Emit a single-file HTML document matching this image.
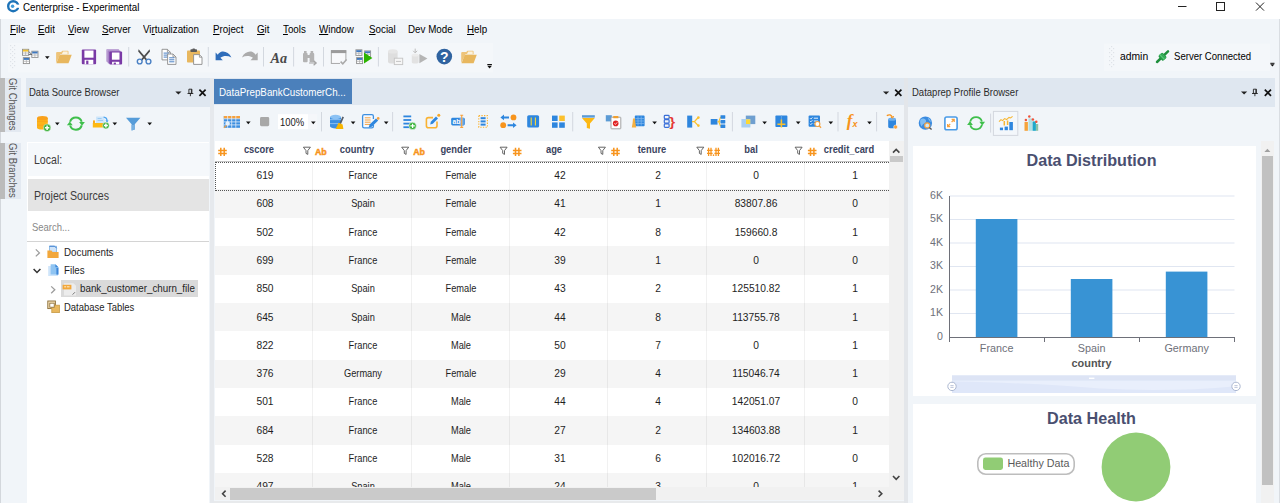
<!DOCTYPE html><html><head><meta charset="utf-8"><title>Centerprise - Experimental</title><style>
*{box-sizing:border-box;margin:0;padding:0}
html,body{width:1280px;height:503px;overflow:hidden}
body{position:relative;background:#f1f5f9;font-family:"Liberation Sans",sans-serif;font-size:12px;color:#1e1e1e}
.a{position:absolute}
.t{position:absolute;white-space:nowrap;transform-origin:0 50%;transform:scaleX(.89);line-height:14px;height:14px;font-size:11px}
.tc{position:absolute;white-space:nowrap;transform-origin:50% 50%;transform:scaleX(.93);line-height:14px;height:14px;text-align:center;font-size:11px}
u{text-decoration:underline;text-underline-offset:.5px;text-decoration-thickness:1px}
svg{position:absolute;overflow:visible}
</style></head><body>
<div class="a" style="left:0;top:0;width:1280px;height:19px;background:#fff"></div>
<div class="t" style="left:23.4px;top:-0.5px;color:#000">Centerprise - Experimental</div>
<div class="t" style="left:10px;top:22px;color:#000"><u>F</u>ile</div>
<div class="t" style="left:38px;top:22px;color:#000"><u>E</u>dit</div>
<div class="t" style="left:68px;top:22px;color:#000"><u>V</u>iew</div>
<div class="t" style="left:102px;top:22px;color:#000"><u>S</u>erver</div>
<div class="t" style="left:143px;top:22px;color:#000">Vi<u>r</u>tualization</div>
<div class="t" style="left:213px;top:22px;color:#000"><u>P</u>roject</div>
<div class="t" style="left:257px;top:22px;color:#000"><u>G</u>it</div>
<div class="t" style="left:283px;top:22px;color:#000"><u>T</u>ools</div>
<div class="t" style="left:319px;top:22px;color:#000"><u>W</u>indow</div>
<div class="t" style="left:369px;top:22px;color:#000"><u>S</u>ocial</div>
<div class="t" style="left:408px;top:22px;color:#000">Dev Mode</div>
<div class="t" style="left:467px;top:22px;color:#000"><u>H</u>elp</div>
<div class="a" style="left:0;top:19px;width:1px;height:484px;background:#d3d7dc"></div><div class="a" style="left:1279px;top:19px;width:1px;height:484px;background:#d9dde2"></div>
<div class="a" style="left:0;top:78px;width:21px;height:54px;background:#e3e9f1"></div><div class="a" style="left:0;top:78px;width:4.8px;height:54px;background:#bbbbbb"></div>
<div class="a" style="left:0;top:143px;width:21px;height:56px;background:#e3e9f1"></div><div class="a" style="left:0;top:143px;width:4.8px;height:55.5px;background:#bbbbbb"></div>
<div class="a" style="left:6px;top:79px;width:14px;height:60px"><div class="t" style="left:14.2px;top:-0.6px;transform-origin:0 0;transform:rotate(90deg) scaleX(.9);color:#555;font-size:10.5px">Git Changes</div></div>
<div class="a" style="left:6px;top:144px;width:14px;height:60px"><div class="t" style="left:14.2px;top:-0.6px;transform-origin:0 0;transform:rotate(90deg) scaleX(.9);color:#555;font-size:10.5px">Git Branches</div></div>
<div class="a" style="left:26px;top:78px;width:184px;height:425px;background:#f1f5f9"></div>
<div class="a" style="left:26px;top:78px;width:184px;height:29px;background:#dfe7f0"></div>
<div class="t" style="left:29px;top:85px;color:#2b2b2b;transform:scaleX(.865)">Data Source Browser</div>
<div class="a" style="left:26.5px;top:141.5px;width:182.5px;height:362px;background:#fff"></div>
<div class="a" style="left:28px;top:143px;width:181px;height:33px;background:#f5f8fb"></div>
<div class="t" style="left:34px;top:152.8px;font-size:12px;color:#3c3c3c;transform:scaleX(.88)">Local:</div>
<div class="a" style="left:28px;top:179.3px;width:181px;height:32.2px;background:#e4e4e4"></div>
<div class="t" style="left:34px;top:188.7px;font-size:12px;color:#3c3c3c;transform:scaleX(.885)">Project Sources</div>
<div class="t" style="left:32px;top:219.5px;color:#888;transform:scaleX(.86)">Search...</div>
<div class="a" style="left:27px;top:240.5px;width:182px;height:1.5px;background:#d4d4d4"></div>
<div class="t" style="left:64px;top:245px">Documents</div>
<div class="t" style="left:64px;top:263px">Files</div>
<div class="a" style="left:61px;top:279.5px;width:137.2px;height:17.6px;background:#dadada"></div>
<div class="t" style="left:80px;top:281px">bank_customer_churn_file</div>
<div class="t" style="left:64px;top:300px;transform:scaleX(.86)">Database Tables</div>
<div class="a" style="left:214px;top:78px;width:690px;height:425px;background:#f1f5f9"></div>
<div class="a" style="left:214px;top:78px;width:690px;height:27px;background:#dfe7f0"></div>
<div class="a" style="left:214px;top:79px;width:138px;height:25px;background:#4b80bb"></div>
<div class="t" style="left:219px;top:85px;color:#fff">DataPrepBankCustomerCh...</div>
<div class="a" style="left:215px;top:141px;width:674px;height:20px;background:#fff"></div>
<div class="a" style="left:215px;top:161px;width:674px;height:327px;overflow:hidden;background:#fff">
<div class="a" style="left:0;top:0.00px;width:674px;height:28.4px;background:#fff">
<div class="tc" style="left:9.8px;width:80px;top:7.00px;transform:scaleX(.93)">619</div>
<div class="tc" style="left:107.9px;width:80px;top:7.00px;transform:scaleX(.84)">France</div>
<div class="tc" style="left:206.3px;width:80px;top:7.00px;transform:scaleX(.84)">Female</div>
<div class="tc" style="left:304.7px;width:80px;top:7.00px;transform:scaleX(.93)">42</div>
<div class="tc" style="left:403.0px;width:80px;top:7.00px;transform:scaleX(.93)">2</div>
<div class="tc" style="left:501.3px;width:80px;top:7.00px;transform:scaleX(.93)">0</div>
<div class="tc" style="left:599.6px;width:80px;top:7.00px;transform:scaleX(.93)">1</div>
</div>
<div class="a" style="left:0;top:28.38px;width:674px;height:28.4px;background:#f5f5f5">
<div class="tc" style="left:9.8px;width:80px;top:6.93px;transform:scaleX(.93)">608</div>
<div class="tc" style="left:107.9px;width:80px;top:6.93px;transform:scaleX(.84)">Spain</div>
<div class="tc" style="left:206.3px;width:80px;top:6.93px;transform:scaleX(.84)">Female</div>
<div class="tc" style="left:304.7px;width:80px;top:6.93px;transform:scaleX(.93)">41</div>
<div class="tc" style="left:403.0px;width:80px;top:6.93px;transform:scaleX(.93)">1</div>
<div class="tc" style="left:501.3px;width:80px;top:6.93px;transform:scaleX(.93)">83807.86</div>
<div class="tc" style="left:599.6px;width:80px;top:6.93px;transform:scaleX(.93)">0</div>
</div>
<div class="a" style="left:0;top:56.76px;width:674px;height:28.4px;background:#fff">
<div class="tc" style="left:9.8px;width:80px;top:6.86px;transform:scaleX(.93)">502</div>
<div class="tc" style="left:107.9px;width:80px;top:6.86px;transform:scaleX(.84)">France</div>
<div class="tc" style="left:206.3px;width:80px;top:6.86px;transform:scaleX(.84)">Female</div>
<div class="tc" style="left:304.7px;width:80px;top:6.86px;transform:scaleX(.93)">42</div>
<div class="tc" style="left:403.0px;width:80px;top:6.86px;transform:scaleX(.93)">8</div>
<div class="tc" style="left:501.3px;width:80px;top:6.86px;transform:scaleX(.93)">159660.8</div>
<div class="tc" style="left:599.6px;width:80px;top:6.86px;transform:scaleX(.93)">1</div>
</div>
<div class="a" style="left:0;top:85.14px;width:674px;height:28.4px;background:#f5f5f5">
<div class="tc" style="left:9.8px;width:80px;top:6.79px;transform:scaleX(.93)">699</div>
<div class="tc" style="left:107.9px;width:80px;top:6.79px;transform:scaleX(.84)">France</div>
<div class="tc" style="left:206.3px;width:80px;top:6.79px;transform:scaleX(.84)">Female</div>
<div class="tc" style="left:304.7px;width:80px;top:6.79px;transform:scaleX(.93)">39</div>
<div class="tc" style="left:403.0px;width:80px;top:6.79px;transform:scaleX(.93)">1</div>
<div class="tc" style="left:501.3px;width:80px;top:6.79px;transform:scaleX(.93)">0</div>
<div class="tc" style="left:599.6px;width:80px;top:6.79px;transform:scaleX(.93)">0</div>
</div>
<div class="a" style="left:0;top:113.52px;width:674px;height:28.4px;background:#fff">
<div class="tc" style="left:9.8px;width:80px;top:6.72px;transform:scaleX(.93)">850</div>
<div class="tc" style="left:107.9px;width:80px;top:6.72px;transform:scaleX(.84)">Spain</div>
<div class="tc" style="left:206.3px;width:80px;top:6.72px;transform:scaleX(.84)">Female</div>
<div class="tc" style="left:304.7px;width:80px;top:6.72px;transform:scaleX(.93)">43</div>
<div class="tc" style="left:403.0px;width:80px;top:6.72px;transform:scaleX(.93)">2</div>
<div class="tc" style="left:501.3px;width:80px;top:6.72px;transform:scaleX(.93)">125510.82</div>
<div class="tc" style="left:599.6px;width:80px;top:6.72px;transform:scaleX(.93)">1</div>
</div>
<div class="a" style="left:0;top:141.90px;width:674px;height:28.4px;background:#f5f5f5">
<div class="tc" style="left:9.8px;width:80px;top:6.65px;transform:scaleX(.93)">645</div>
<div class="tc" style="left:107.9px;width:80px;top:6.65px;transform:scaleX(.84)">Spain</div>
<div class="tc" style="left:206.3px;width:80px;top:6.65px;transform:scaleX(.84)">Male</div>
<div class="tc" style="left:304.7px;width:80px;top:6.65px;transform:scaleX(.93)">44</div>
<div class="tc" style="left:403.0px;width:80px;top:6.65px;transform:scaleX(.93)">8</div>
<div class="tc" style="left:501.3px;width:80px;top:6.65px;transform:scaleX(.93)">113755.78</div>
<div class="tc" style="left:599.6px;width:80px;top:6.65px;transform:scaleX(.93)">1</div>
</div>
<div class="a" style="left:0;top:170.28px;width:674px;height:28.4px;background:#fff">
<div class="tc" style="left:9.8px;width:80px;top:6.58px;transform:scaleX(.93)">822</div>
<div class="tc" style="left:107.9px;width:80px;top:6.58px;transform:scaleX(.84)">France</div>
<div class="tc" style="left:206.3px;width:80px;top:6.58px;transform:scaleX(.84)">Male</div>
<div class="tc" style="left:304.7px;width:80px;top:6.58px;transform:scaleX(.93)">50</div>
<div class="tc" style="left:403.0px;width:80px;top:6.58px;transform:scaleX(.93)">7</div>
<div class="tc" style="left:501.3px;width:80px;top:6.58px;transform:scaleX(.93)">0</div>
<div class="tc" style="left:599.6px;width:80px;top:6.58px;transform:scaleX(.93)">1</div>
</div>
<div class="a" style="left:0;top:198.66px;width:674px;height:28.4px;background:#f5f5f5">
<div class="tc" style="left:9.8px;width:80px;top:6.51px;transform:scaleX(.93)">376</div>
<div class="tc" style="left:107.9px;width:80px;top:6.51px;transform:scaleX(.84)">Germany</div>
<div class="tc" style="left:206.3px;width:80px;top:6.51px;transform:scaleX(.84)">Female</div>
<div class="tc" style="left:304.7px;width:80px;top:6.51px;transform:scaleX(.93)">29</div>
<div class="tc" style="left:403.0px;width:80px;top:6.51px;transform:scaleX(.93)">4</div>
<div class="tc" style="left:501.3px;width:80px;top:6.51px;transform:scaleX(.93)">115046.74</div>
<div class="tc" style="left:599.6px;width:80px;top:6.51px;transform:scaleX(.93)">1</div>
</div>
<div class="a" style="left:0;top:227.04px;width:674px;height:28.4px;background:#fff">
<div class="tc" style="left:9.8px;width:80px;top:6.44px;transform:scaleX(.93)">501</div>
<div class="tc" style="left:107.9px;width:80px;top:6.44px;transform:scaleX(.84)">France</div>
<div class="tc" style="left:206.3px;width:80px;top:6.44px;transform:scaleX(.84)">Male</div>
<div class="tc" style="left:304.7px;width:80px;top:6.44px;transform:scaleX(.93)">44</div>
<div class="tc" style="left:403.0px;width:80px;top:6.44px;transform:scaleX(.93)">4</div>
<div class="tc" style="left:501.3px;width:80px;top:6.44px;transform:scaleX(.93)">142051.07</div>
<div class="tc" style="left:599.6px;width:80px;top:6.44px;transform:scaleX(.93)">0</div>
</div>
<div class="a" style="left:0;top:255.42px;width:674px;height:28.4px;background:#f5f5f5">
<div class="tc" style="left:9.8px;width:80px;top:6.37px;transform:scaleX(.93)">684</div>
<div class="tc" style="left:107.9px;width:80px;top:6.37px;transform:scaleX(.84)">France</div>
<div class="tc" style="left:206.3px;width:80px;top:6.37px;transform:scaleX(.84)">Male</div>
<div class="tc" style="left:304.7px;width:80px;top:6.37px;transform:scaleX(.93)">27</div>
<div class="tc" style="left:403.0px;width:80px;top:6.37px;transform:scaleX(.93)">2</div>
<div class="tc" style="left:501.3px;width:80px;top:6.37px;transform:scaleX(.93)">134603.88</div>
<div class="tc" style="left:599.6px;width:80px;top:6.37px;transform:scaleX(.93)">1</div>
</div>
<div class="a" style="left:0;top:283.80px;width:674px;height:28.4px;background:#fff">
<div class="tc" style="left:9.8px;width:80px;top:6.30px;transform:scaleX(.93)">528</div>
<div class="tc" style="left:107.9px;width:80px;top:6.30px;transform:scaleX(.84)">France</div>
<div class="tc" style="left:206.3px;width:80px;top:6.30px;transform:scaleX(.84)">Male</div>
<div class="tc" style="left:304.7px;width:80px;top:6.30px;transform:scaleX(.93)">31</div>
<div class="tc" style="left:403.0px;width:80px;top:6.30px;transform:scaleX(.93)">6</div>
<div class="tc" style="left:501.3px;width:80px;top:6.30px;transform:scaleX(.93)">102016.72</div>
<div class="tc" style="left:599.6px;width:80px;top:6.30px;transform:scaleX(.93)">0</div>
</div>
<div class="a" style="left:0;top:312.18px;width:674px;height:28.4px;background:#f5f5f5">
<div class="tc" style="left:9.8px;width:80px;top:6.23px;transform:scaleX(.93)">497</div>
<div class="tc" style="left:107.9px;width:80px;top:6.23px;transform:scaleX(.84)">Spain</div>
<div class="tc" style="left:206.3px;width:80px;top:6.23px;transform:scaleX(.84)">Male</div>
<div class="tc" style="left:304.7px;width:80px;top:6.23px;transform:scaleX(.93)">24</div>
<div class="tc" style="left:403.0px;width:80px;top:6.23px;transform:scaleX(.93)">3</div>
<div class="tc" style="left:501.3px;width:80px;top:6.23px;transform:scaleX(.93)">0</div>
<div class="tc" style="left:599.6px;width:80px;top:6.23px;transform:scaleX(.93)">1</div>
</div>
<div class="a" style="left:97.2px;top:0;width:1px;height:327px;background:rgba(0,0,0,.055)"></div>
<div class="a" style="left:195.5px;top:0;width:1px;height:327px;background:rgba(0,0,0,.055)"></div>
<div class="a" style="left:293.9px;top:0;width:1px;height:327px;background:rgba(0,0,0,.055)"></div>
<div class="a" style="left:392.2px;top:0;width:1px;height:327px;background:rgba(0,0,0,.055)"></div>
<div class="a" style="left:490.6px;top:0;width:1px;height:327px;background:rgba(0,0,0,.055)"></div>
<div class="a" style="left:588.9px;top:0;width:1px;height:327px;background:rgba(0,0,0,.055)"></div>
</div>
<div class="a" style="left:0;top:0;width:889px;height:165px;overflow:hidden">
<div class="tc" style="left:214.0px;width:90px;top:142px;font-size:11px;font-weight:bold;color:#3a4460;transform:scaleX(.85)">cscore</div>
<div class="tc" style="left:312.1px;width:90px;top:142px;font-size:11px;font-weight:bold;color:#3a4460;transform:scaleX(.85)">country</div>
<div class="tc" style="left:410.5px;width:90px;top:142px;font-size:11px;font-weight:bold;color:#3a4460;transform:scaleX(.85)">gender</div>
<div class="tc" style="left:508.9px;width:90px;top:142px;font-size:11px;font-weight:bold;color:#3a4460;transform:scaleX(.85)">age</div>
<div class="tc" style="left:607.2px;width:90px;top:142px;font-size:11px;font-weight:bold;color:#3a4460;transform:scaleX(.85)">tenure</div>
<div class="tc" style="left:705.5px;width:90px;top:142px;font-size:11px;font-weight:bold;color:#3a4460;transform:scaleX(.85)">bal</div>
<div class="tc" style="left:803.9px;width:90px;top:142px;font-size:11px;font-weight:bold;color:#3a4460;transform:scaleX(.85)">credit_card</div>
</div>
<div class="a" style="left:215px;top:160.5px;width:674px;height:1px;background:#c4c4c4"></div>
<div class="a" style="left:215px;top:162.1px;width:674px;height:28.5px;overflow:hidden"><div class="a" style="left:0;top:0;width:700px;height:28.5px;border:1px dotted #555"></div></div>
<div class="a" style="left:889px;top:141px;width:15px;height:347px;background:#f1f1f1"></div>
<div class="a" style="left:890px;top:156px;width:13px;height:6px;background:#c9c9c9"></div>
<div class="a" style="left:214.5px;top:486.7px;width:689.3px;height:13.8px;background:#f1f1f1"></div>
<div class="a" style="left:230.2px;top:487.5px;width:426.2px;height:12.3px;background:#cacaca"></div>
<div class="a" style="left:209.5px;top:78px;width:4.8px;height:425px;background:#e6e9ed"></div>
<div class="a" style="left:214.3px;top:500.5px;width:689.5px;height:2.5px;background:#e8eaec"></div>
<div class="a" style="left:904px;top:78px;width:4px;height:425px;background:#e3e6ea"></div>
<div class="a" style="left:908px;top:78px;width:367px;height:425px;background:#f1f5f9"></div>
<div class="a" style="left:908px;top:78px;width:367px;height:29px;background:#dfe7f0"></div>
<div class="t" style="left:912px;top:85px;color:#2b2b2b;transform:scaleX(.865)">Dataprep Profile Browser</div>
<div class="a" style="left:913px;top:145.5px;width:343px;height:250.5px;background:#fff"></div>
<div class="a" style="left:913px;top:404px;width:343px;height:99px;background:#fff"></div>
<div class="a" style="left:1261px;top:141px;width:13px;height:362px;background:#f1f1f1"></div>
<div class="a" style="left:1262px;top:156px;width:11px;height:329px;background:#c1c1c1"></div>
<svg class="a" style="left:0;top:0" width="1280" height="503" viewBox="0 0 1280 503"><circle cx="13.2" cy="6.2" r="5.0" fill="none" stroke="#1d73b8" stroke-width="2.4"/><rect x="15.5" y="4.6" width="5" height="3.2" rx="0" fill="#fff" /><circle cx="12.6" cy="6.3" r="1.7" fill="#3f9ad8"/><line x1="1178" y1="6.5" x2="1186.5" y2="6.5" stroke="#222" stroke-width="1" /><rect x="1216.5" y="2.5" width="8" height="8" rx="0" fill="none" stroke="#222" stroke-width="1" /><path d="M1256 2.6 L1264 10.6 M1264 2.6 L1256 10.6" fill="none" stroke="#222" stroke-width="1" /><rect x="8" y="43" width="485" height="29.5" rx="0" fill="#f4f7fa" /><rect x="10" y="45" width="1.2" height="1.2" rx="0" fill="#dfe3e8" /><rect x="14" y="45" width="1.2" height="1.2" rx="0" fill="#dfe3e8" /><rect x="12" y="47" width="1.2" height="1.2" rx="0" fill="#dfe3e8" /><rect x="10" y="49" width="1.2" height="1.2" rx="0" fill="#dfe3e8" /><rect x="14" y="49" width="1.2" height="1.2" rx="0" fill="#dfe3e8" /><rect x="12" y="51" width="1.2" height="1.2" rx="0" fill="#dfe3e8" /><rect x="10" y="53" width="1.2" height="1.2" rx="0" fill="#dfe3e8" /><rect x="14" y="53" width="1.2" height="1.2" rx="0" fill="#dfe3e8" /><rect x="12" y="55" width="1.2" height="1.2" rx="0" fill="#dfe3e8" /><rect x="10" y="57" width="1.2" height="1.2" rx="0" fill="#dfe3e8" /><rect x="14" y="57" width="1.2" height="1.2" rx="0" fill="#dfe3e8" /><rect x="12" y="59" width="1.2" height="1.2" rx="0" fill="#dfe3e8" /><rect x="10" y="61" width="1.2" height="1.2" rx="0" fill="#dfe3e8" /><rect x="14" y="61" width="1.2" height="1.2" rx="0" fill="#dfe3e8" /><rect x="12" y="63" width="1.2" height="1.2" rx="0" fill="#dfe3e8" /><rect x="10" y="65" width="1.2" height="1.2" rx="0" fill="#dfe3e8" /><rect x="14" y="65" width="1.2" height="1.2" rx="0" fill="#dfe3e8" /><rect x="12" y="67" width="1.2" height="1.2" rx="0" fill="#dfe3e8" /><rect x="22.5" y="49.3" width="6.2" height="6" rx="0" fill="#fff" stroke="#8f8f8f" stroke-width="0.9" /><rect x="22.9" y="49.699999999999996" width="5.4" height="1.9" rx="0" fill="#f2c230" /><line x1="22.5" y1="53.019999999999996" x2="28.7" y2="53.019999999999996" stroke="#a9a9a9" stroke-width="0.7" /><line x1="25.6" y1="51.5" x2="25.6" y2="55.3" stroke="#a9a9a9" stroke-width="0.7" /><rect x="31.8" y="51.2" width="6.2" height="6.2" rx="0" fill="#fff" stroke="#8f8f8f" stroke-width="0.9" /><rect x="32.2" y="51.6" width="5.4" height="1.9" rx="0" fill="#3f78bf" /><line x1="31.8" y1="55.044000000000004" x2="38.0" y2="55.044000000000004" stroke="#a9a9a9" stroke-width="0.7" /><line x1="34.9" y1="53.400000000000006" x2="34.9" y2="57.400000000000006" stroke="#a9a9a9" stroke-width="0.7" /><rect x="23.3" y="57.6" width="6.2" height="6" rx="0" fill="#fff" stroke="#8f8f8f" stroke-width="0.9" /><rect x="23.7" y="58.0" width="5.4" height="1.9" rx="0" fill="#3f78bf" /><line x1="23.3" y1="61.32" x2="29.5" y2="61.32" stroke="#a9a9a9" stroke-width="0.7" /><line x1="26.400000000000002" y1="59.800000000000004" x2="26.400000000000002" y2="63.6" stroke="#a9a9a9" stroke-width="0.7" /><path d="M28.7 51.5 L31.8 54.5 M28.7 54.5 L31.8 54.5" fill="none" stroke="#555" stroke-width="0.8" /><polygon points="45,56.2 49.6,56.2 47.3,59.1" fill="#111"/><path d="M56.1 63.0 V52.900000000000006 Q56.1 51.900000000000006 57.1 51.900000000000006 H61.1 L62.4 50.7 H67.7 Q68.5 50.7 68.5 51.7 V54.300000000000004 H60.300000000000004 Z" fill="#eec47a" /><path d="M63.1 51.6 H67.6 V54.1 H61.9 Z" fill="#fbf3e0" /><path d="M56.4 63.2 L59.7 54.800000000000004 H71.7 L68.5 63.2 Z" fill="#e8b75e" /><rect x="81.8" y="49.6" width="14.3" height="14.6" rx="1" fill="#7a3aa6" /><rect x="84.39999999999999" y="50.5" width="9.100000000000001" height="7.2" rx="0" fill="#fff" /><rect x="84.6" y="59.8" width="8.700000000000001" height="4.4" rx="0" fill="#fff" /><rect x="86.2" y="60.6" width="2.2" height="3.5999999999999996" rx="0" fill="#7a3aa6" /><rect x="106.2" y="49" width="13" height="13" rx="1" fill="#bfa6d6" /><rect x="107.6" y="50.4" width="13" height="13" rx="1" fill="#a683c6" /><rect x="109.3" y="51.6" width="12.8" height="12.8" rx="1" fill="#7a3aa6" /><rect x="111.89999999999999" y="52.5" width="7.6000000000000005" height="7.2" rx="0" fill="#fff" /><rect x="112.1" y="61.8" width="7.200000000000001" height="2.6000000000000014" rx="0" fill="#fff" /><rect x="113.7" y="62.6" width="2.2" height="1.8000000000000007" rx="0" fill="#7a3aa6" /><rect x="128.2" y="47" width="1" height="19.5" fill="#d3d8df"/><path d="M138.6 49.2 L147.3 59.6 L145.9 60.4 L138.2 51.6 Z" fill="#4b4b4b" /><path d="M149.6 49.2 L140.9 59.6 L142.3 60.4 L150 51.6 Z" fill="#4b4b4b" /><circle cx="139.7" cy="61.5" r="2.4" fill="none" stroke="#4a80c4" stroke-width="1.4"/><circle cx="148.5" cy="61.5" r="2.4" fill="none" stroke="#4a80c4" stroke-width="1.4"/><path d="M162 49.3 H167.4 L170.4 52.3 V59.9 H162 Z" fill="#fff" stroke="#8c8c8c" stroke-width="0.9" /><path d="M167.4 49.3 V52.3 H170.4" fill="none" stroke="#8c8c8c" stroke-width="0.8" /><line x1="163.6" y1="53.099999999999994" x2="168.8" y2="53.099999999999994" stroke="#4a80c4" stroke-width="1" /><line x1="163.6" y1="55.099999999999994" x2="168.8" y2="55.099999999999994" stroke="#4a80c4" stroke-width="1" /><line x1="163.6" y1="57.099999999999994" x2="168.8" y2="57.099999999999994" stroke="#4a80c4" stroke-width="1" /><path d="M167.6 54 H173.0 L176.0 57 V64.4 H167.6 Z" fill="#fff" stroke="#8c8c8c" stroke-width="0.9" /><path d="M173.0 54 V57 H176.0" fill="none" stroke="#8c8c8c" stroke-width="0.8" /><line x1="169.2" y1="57.8" x2="174.4" y2="57.8" stroke="#4a80c4" stroke-width="1" /><line x1="169.2" y1="59.8" x2="174.4" y2="59.8" stroke="#4a80c4" stroke-width="1" /><line x1="169.2" y1="61.8" x2="174.4" y2="61.8" stroke="#4a80c4" stroke-width="1" /><rect x="187" y="50.6" width="13" height="12" rx="0.8" fill="#e8b75e" /><rect x="190.4" y="49.2" width="6.6" height="2.8" rx="0.8" fill="#5a5a5a" /><rect x="192.4" y="48.6" width="2.6" height="1.6" rx="0.6" fill="#5a5a5a" /><path d="M193.6 54.6 H199.4 L202.0 57.2 V64.4 H193.6 Z" fill="#fff" stroke="#8c8c8c" stroke-width="0.9" /><path d="M199.4 54.6 V57.2 H202.0" fill="none" stroke="#8c8c8c" stroke-width="0.8" /><rect x="207.8" y="47" width="1" height="19.5" fill="#d3d8df"/><path d="M215.6 52.6 V60.2 H222.8 L220.4 57.8 C223.4 55.6 227.6 55.6 231.4 57.4 C229.4 53 225.2 51 222 51.6 C220.2 52 218.8 53.2 217.8 54.8 Z" fill="#2f6dba" /><path d="M257.7 52.6 V60.2 H250.5 L252.9 57.8 C249.9 55.6 245.7 55.6 241.9 57.4 C243.9 53 248.1 51 251.3 51.6 C253.1 52 254.5 53.2 255.5 54.8 Z" fill="#ababab" /><rect x="263.0" y="47" width="1" height="19.5" fill="#d3d8df"/><text x="270.6" y="62.6" font-family="Liberation Serif,serif" font-weight="bold" font-style="italic" font-size="14" fill="#4a4a4a" textLength="16.6" lengthAdjust="spacingAndGlyphs">Aa</text><rect x="293.1" y="47" width="1" height="19.5" fill="#d3d8df"/><rect x="303" y="53" width="4.6" height="9.2" rx="1" fill="#b3b3b3" /><rect x="309.6" y="53" width="4.6" height="9.2" rx="1" fill="#b3b3b3" /><rect x="304" y="51" width="2.6" height="3" rx="0" fill="#b3b3b3" /><rect x="310.6" y="51" width="2.6" height="3" rx="0" fill="#b3b3b3" /><rect x="307" y="55" width="3" height="3" rx="0" fill="#b3b3b3" /><path d="M309 63 H316 M313.6 60.8 L316.2 63 L313.6 65.2" fill="none" stroke="#a5a5a5" stroke-width="1.2" /><rect x="323.0" y="47" width="1" height="19.5" fill="#d3d8df"/><rect x="331.3" y="50.6" width="14.6" height="12.8" rx="0" fill="#f8f9fb" stroke="#a0a0a0" stroke-width="0.9" /><rect x="331" y="50.3" width="15.2" height="2.8" rx="0" fill="#9b9b9b" /><rect x="340" y="60" width="7" height="5" rx="0" fill="#f4f7fa" /><path d="M340.6 61.6 L342.8 63.8 L346.6 59.4" fill="none" stroke="#a9a9a9" stroke-width="1.5" /><rect x="355.9" y="49.8" width="6" height="5.6" rx="0" fill="#fff" stroke="#8f8f8f" stroke-width="0.9" /><rect x="356.29999999999995" y="50.199999999999996" width="5.2" height="1.9" rx="0" fill="#3f78bf" /><line x1="355.9" y1="53.272" x2="361.9" y2="53.272" stroke="#a9a9a9" stroke-width="0.7" /><line x1="358.9" y1="52.0" x2="358.9" y2="55.4" stroke="#a9a9a9" stroke-width="0.7" /><rect x="364.6" y="50.9" width="6" height="5.6" rx="0" fill="#fff" stroke="#8f8f8f" stroke-width="0.9" /><rect x="365.0" y="51.3" width="5.2" height="1.9" rx="0" fill="#3f78bf" /><line x1="364.6" y1="54.372" x2="370.6" y2="54.372" stroke="#a9a9a9" stroke-width="0.7" /><line x1="367.6" y1="53.1" x2="367.6" y2="56.5" stroke="#a9a9a9" stroke-width="0.7" /><rect x="356.6" y="57.6" width="6" height="6" rx="0" fill="#fff" stroke="#8f8f8f" stroke-width="0.9" /><rect x="357.0" y="58.0" width="5.2" height="1.9" rx="0" fill="#3f78bf" /><line x1="356.6" y1="61.32" x2="362.6" y2="61.32" stroke="#a9a9a9" stroke-width="0.7" /><line x1="359.6" y1="59.800000000000004" x2="359.6" y2="63.6" stroke="#a9a9a9" stroke-width="0.7" /><path d="M364 52.4 L372.4 58 L364 63.6 Z" fill="#2cb400" /><rect x="377.9" y="47" width="1" height="19.5" fill="#d3d8df"/><path d="M388 51.4 V61.4 A4.8 2.2 0 0 0 397.6 61.4 V51.4 Z" fill="#dedede" /><ellipse cx="392.8" cy="51.4" rx="4.8" ry="2.2" fill="#e6e6e6"/><rect x="394.3" y="58.2" width="8.4" height="6.4" rx="0" fill="#f6f6f6" stroke="#c4c4c4" stroke-width="0.9" /><line x1="396" y1="61.4" x2="401" y2="61.4" stroke="#c4c4c4" stroke-width="1" /><path d="M411.8 55 V62 A3.4 1.6 0 0 0 418.6 62 V55 Z" fill="#e2e2e2" /><ellipse cx="415.2" cy="55" rx="3.4" ry="1.6" fill="#ececec"/><path d="M415.2 48.6 V52.6 M413.2 50.8 L415.2 52.9 L417.2 50.8" fill="none" stroke="#bdbdbd" stroke-width="1" /><path d="M419.4 54 L427.4 58.6 L419.4 63.2 Z" fill="#b5b5b5" /><circle cx="444.3" cy="56.6" r="7.8" fill="#2f63a0"/><text x="444.3" y="61.6" text-anchor="middle" font-family="Liberation Sans,sans-serif" font-weight="bold" font-size="14" fill="#fff">?</text><path d="M461.2 63.0 V52.900000000000006 Q461.2 51.900000000000006 462.2 51.900000000000006 H466.2 L467.5 50.7 H472.8 Q473.59999999999997 50.7 473.59999999999997 51.7 V54.300000000000004 H465.4 Z" fill="#eec47a" /><path d="M468.2 51.6 H472.7 V54.1 H467.0 Z" fill="#fbf3e0" /><path d="M461.5 63.2 L464.8 54.800000000000004 H476.8 L473.59999999999997 63.2 Z" fill="#e8b75e" /><rect x="487.3" y="64" width="4.6" height="1.1" rx="0" fill="#111" /><polygon points="487.3,65.8 491.90000000000003,65.8 489.6,68.6" fill="#111"/><rect x="1104" y="43.5" width="166" height="27.5" rx="0" fill="#f4f7fa" /><rect x="1111" y="46" width="1.2" height="1.2" rx="0" fill="#dfe3e8" /><rect x="1109" y="48" width="1.2" height="1.2" rx="0" fill="#dfe3e8" /><rect x="1113" y="48" width="1.2" height="1.2" rx="0" fill="#dfe3e8" /><rect x="1111" y="50" width="1.2" height="1.2" rx="0" fill="#dfe3e8" /><rect x="1109" y="52" width="1.2" height="1.2" rx="0" fill="#dfe3e8" /><rect x="1113" y="52" width="1.2" height="1.2" rx="0" fill="#dfe3e8" /><rect x="1111" y="54" width="1.2" height="1.2" rx="0" fill="#dfe3e8" /><rect x="1109" y="56" width="1.2" height="1.2" rx="0" fill="#dfe3e8" /><rect x="1113" y="56" width="1.2" height="1.2" rx="0" fill="#dfe3e8" /><rect x="1111" y="58" width="1.2" height="1.2" rx="0" fill="#dfe3e8" /><rect x="1109" y="60" width="1.2" height="1.2" rx="0" fill="#dfe3e8" /><rect x="1113" y="60" width="1.2" height="1.2" rx="0" fill="#dfe3e8" /><rect x="1111" y="62" width="1.2" height="1.2" rx="0" fill="#dfe3e8" /><rect x="1109" y="64" width="1.2" height="1.2" rx="0" fill="#dfe3e8" /><rect x="1113" y="64" width="1.2" height="1.2" rx="0" fill="#dfe3e8" /><rect x="1111" y="66" width="1.2" height="1.2" rx="0" fill="#dfe3e8" /><path d="M1157 62 L1168 51.4" fill="none" stroke="#1f8f3c" stroke-width="2.5" stroke-linecap="round"/><g transform="rotate(-44 1162.5 56.7)"><rect x="1159.6" y="53.2" width="5.8" height="7" rx="1.4" fill="#259a45"/><rect x="1161.2" y="53.2" width="1.5" height="7" fill="#57c878"/><rect x="1163.3" y="53.4" width="1" height="6.6" fill="#3fb562"/></g><rect x="1270.3" y="62.8" width="4.2" height="1" rx="0" fill="#111" /><polygon points="1270.3,64.2 1274.5,64.2 1272.3999999999999,66.60000000000001" fill="#111"/><polygon points="175.3,91.39999999999999 181.5,91.39999999999999 178.4,94.6" fill="#222"/><path d="M188.9 89.19999999999999 H191.9 V93.39999999999999 H188.9 Z M187.5 93.5 H193.3 M190.4 93.6 V96.19999999999999 M191.4 89.19999999999999 V93.39999999999999" fill="none" stroke="#222" stroke-width="0.9" /><path d="M199.4 89.6 L205.6 95.8 M205.6 89.6 L199.4 95.8" fill="none" stroke="#111" stroke-width="1.7" /><polygon points="883,91.39999999999999 889.2,91.39999999999999 886.1,94.6" fill="#222"/><path d="M895.2 89.6 L901.4000000000001 95.8 M901.4000000000001 89.6 L895.2 95.8" fill="none" stroke="#111" stroke-width="1.7" /><polygon points="1241,91.39999999999999 1247.2,91.39999999999999 1244.1,94.6" fill="#222"/><path d="M1253.4 89.19999999999999 H1256.4 V93.39999999999999 H1253.4 Z M1252 93.5 H1257.8 M1254.9 93.6 V96.19999999999999 M1255.9 89.19999999999999 V93.39999999999999" fill="none" stroke="#222" stroke-width="0.9" /><path d="M1264.8 89.6 L1271.0 95.8 M1271.0 89.6 L1264.8 95.8" fill="none" stroke="#111" stroke-width="1.7" /><path d="M37 118.16 V127.44 A5.4 2.16 0 0 0 47.8 127.44 V118.16 Z" fill="#fdb41a" /><ellipse cx="42.4" cy="118.16" rx="5.4" ry="2.16" fill="#f9a11b"/><line x1="37" y1="121.4" x2="47.8" y2="121.4" stroke="#f9a11b" stroke-width="0.7" /><line x1="37" y1="125.2" x2="47.8" y2="125.2" stroke="#f9a11b" stroke-width="0.7" /><circle cx="47.1" cy="127.8" r="3.7" fill="#3ab03a" stroke="#f4fbf4" stroke-width="0.5"/><path d="M44.88 127.8 H49.32 M47.1 125.58 V130.02" fill="none" stroke="#fff" stroke-width="1.5" /><polygon points="55,122.4 59.6,122.4 57.3,125.30000000000001" fill="#111"/><path d="M70.07 121.82 A6.1 6.1 0 0 1 81.70 121.71" fill="none" stroke="#3fbf4c" stroke-width="2" /><path d="M81.73 125.38 A6.1 6.1 0 0 1 70.10 125.49" fill="none" stroke="#3fbf4c" stroke-width="2" /><path d="M79.10 122.00 H84.90 L82.00 125.80 Z" fill="#3fbf4c" /><path d="M66.90 125.20 H72.70 L69.80 121.40 Z" fill="#3fbf4c" /><rect x="96" y="116.6" width="8.6" height="6.8" rx="0.6" fill="#cfe6fa" /><rect x="97.6" y="118" width="4" height="1" rx="0" fill="#9dccf3" /><rect x="97.6" y="120" width="5.4" height="1" rx="0" fill="#9dccf3" /><path d="M103.6 117.2 Q107.2 117.4 107 121.4" fill="none" stroke="#4aa3f0" stroke-width="1.3" /><path d="M105.4 120.4 L107 122.4 L108.6 120.4 Z" fill="#4aa3f0" /><path d="M93.2 120.4 H94.8 V123 H104.8 V127.6 H92.8 V123 H93.2 Z" fill="#fdb913" /><rect x="93.2" y="120.6" width="1.5" height="2.6" rx="0" fill="#f6a11a" /><circle cx="105.9" cy="125.6" r="3.3" fill="#3ab03a" stroke="#f4fbf4" stroke-width="0.5"/><path d="M103.92 125.6 H107.88000000000001 M105.9 123.61999999999999 V127.58" fill="none" stroke="#fff" stroke-width="1.5" /><polygon points="112.5,122.4 117.1,122.4 114.8,125.30000000000001" fill="#111"/><path d="M126 117.8 H140.4 L134.8 124.2 V129.4 L131.6 130.6 V124.2 Z" fill="#569cd9" /><path d="M131.6 125 H134.8 V129.4 L131.6 130.6 Z" fill="#78b1e2" /><polygon points="147.4,122.4 152.0,122.4 149.70000000000002,125.30000000000001" fill="#111"/><path d="M35.8 249.4 L39.4 252.9 L35.8 256.4" fill="none" stroke="#9c9c9c" stroke-width="1.3" /><path d="M33.6 268.9 L37 272.5 L40.4 268.9" fill="none" stroke="#333" stroke-width="1.5" /><path d="M51.2 286.4 L54.8 289.8 L51.2 293.2" fill="none" stroke="#9c9c9c" stroke-width="1.3" /><rect x="49.6" y="246.2" width="7" height="6" rx="0" fill="#cfe3f8" stroke="#6fa8e0" stroke-width="0.7" /><path d="M49.6 246.2 H54.6 L56.6 248.2" fill="none" stroke="#3d7fd0" stroke-width="1" /><path d="M47.4 250.6 H51.4 L52.6 252 H58.6 V258 H47.4 Z" fill="#f2a73b" /><path d="M48.2 266 H55 L58 269 V276 H48.2 Z" fill="#cfe5fa" /><path d="M50.6 264.2 H55.4 L58.4 267.2 V274.6 H50.6 Z" fill="#8fc4f2" /><path d="M55.4 264.2 V267.2 H58.4 Z" fill="#3d86d8" /><path d="M56.4 268 H58.4 V274.6 H56.4 Z" fill="#3d86d8" /><path d="M64 283.2 H73.4 L76 285.8 V295.6 H64 Z" fill="#ececec" /><rect x="62.6" y="284.8" width="8.8" height="4.6" rx="0" fill="#f2a73b" /><rect x="64.2" y="286.2" width="2" height="1.2" rx="0" fill="#fde5b8" /><rect x="67" y="286.2" width="2.6" height="1.2" rx="0" fill="#fde5b8" /><path d="M72.6 294.6 L75 292.2" fill="none" stroke="#666" stroke-width="0.9" /><rect x="47.8" y="301" width="7.6" height="7.6" rx="0" fill="#f3dfb5" stroke="#8a6b35" stroke-width="0.9" /><rect x="51.8" y="305.2" width="7.6" height="7.4" rx="0" fill="#e8b75e" stroke="#c79a45" stroke-width="0.8" /><rect x="49.8" y="303.2" width="4.4" height="4" rx="0" fill="#fff" stroke="#8a6b35" stroke-width="0.8" /><rect x="223.8" y="116" width="16.2" height="11.8" rx="0" fill="#3d8fe0" /><rect x="223.8" y="116" width="16.2" height="2.6" rx="0" fill="#f7a13c" /><line x1="227.6" y1="116" x2="227.6" y2="127.8" stroke="#e4eefa" stroke-width="0.8" /><line x1="231.7" y1="116" x2="231.7" y2="127.8" stroke="#e4eefa" stroke-width="0.8" /><line x1="235.8" y1="116" x2="235.8" y2="127.8" stroke="#e4eefa" stroke-width="0.8" /><line x1="223.8" y1="118.8" x2="240" y2="118.8" stroke="#e4eefa" stroke-width="0.8" /><line x1="223.8" y1="121.9" x2="240" y2="121.9" stroke="#e4eefa" stroke-width="0.8" /><line x1="223.8" y1="124.9" x2="240" y2="124.9" stroke="#e4eefa" stroke-width="0.8" /><circle cx="227.6" cy="123.4" r="2.2" fill="#e6f1fc"/><path d="M224 127.8 L226.6 125.4" fill="none" stroke="#f7a13c" stroke-width="1.2" /><polygon points="246,121.4 250.6,121.4 248.3,124.30000000000001" fill="#111"/><rect x="260" y="117" width="9.2" height="9.2" rx="1.4" fill="#a8a8a8" /><rect x="278" y="114.2" width="30.2" height="15" rx="0" fill="#fff" /><rect x="308.2" y="114.2" width="9" height="15" rx="0" fill="#f5f7fa" /><polygon points="311,121.4 315.6,121.4 313.3,124.30000000000001" fill="#111"/><rect x="321.0" y="112" width="1" height="19.400000000000006" fill="#d3d8df"/><path d="M330 117.0 V126.2 A5.5 2.2 0 0 0 341 126.2 V117.0 Z" fill="#3d8fe0" /><ellipse cx="335.5" cy="117.0" rx="5.5" ry="2.2" fill="#8cc2f4"/><line x1="330" y1="119.6" x2="341" y2="119.6" stroke="#9ccaf5" stroke-width="0.8" /><line x1="330" y1="123.6" x2="341" y2="123.6" stroke="#9ccaf5" stroke-width="0.8" /><path d="M343.2 116.8 L340.2 123.6" fill="none" stroke="#555e6b" stroke-width="1.7" /><path d="M338.6 122.8 L342.6 124.4 L343.4 129 H335.6 Z" fill="#f7b500" /><polygon points="350.8,121.4 355.40000000000003,121.4 353.1,124.30000000000001" fill="#111"/><rect x="362.6" y="114.7" width="10.8" height="13.2" rx="1.6" fill="#f4f9ff" stroke="#3d8fe0" stroke-width="1.3" /><line x1="364.8" y1="117.8" x2="370.6" y2="117.8" stroke="#f7a13c" stroke-width="1" /><line x1="364.8" y1="120" x2="370.6" y2="120" stroke="#f7a13c" stroke-width="1" /><line x1="364.8" y1="122.2" x2="370.6" y2="122.2" stroke="#f7a13c" stroke-width="1" /><line x1="364.8" y1="124.4" x2="370.6" y2="124.4" stroke="#f7a13c" stroke-width="1" /><rect x="372" y="119" width="3" height="6" rx="0" fill="#f1f5f9" /><path d="M368.6 127.6 L369.6 124.6 L376 118.4 L378.2 120.6 L371.8 126.8 Z" fill="#2e86de" /><circle cx="378.2" cy="118.4" r="1.3" fill="#f7a13c"/><polygon points="383.9,121.4 388.5,121.4 386.2,124.30000000000001" fill="#111"/><rect x="392.1" y="112" width="1" height="19.400000000000006" fill="#d3d8df"/><rect x="403.4" y="115.5" width="7.8" height="1.8" rx="0" fill="#2e86de" /><rect x="403.4" y="119.1" width="7.8" height="1.8" rx="0" fill="#2e86de" /><rect x="403.4" y="122.69999999999999" width="7.8" height="1.8" rx="0" fill="#2e86de" /><rect x="403.4" y="126.3" width="7.8" height="1.8" rx="0" fill="#2e86de" /><circle cx="412.6" cy="125.9" r="3.7" fill="#3cb43c" stroke="#f1f5f9" stroke-width="0.6"/><path d="M410.4 125.9 H414.8 M412.6 123.7 V128.1" fill="none" stroke="#fff" stroke-width="1.2" /><path d="M433 117.6 H428.4 Q426.4 117.6 426.4 119.6 V125.8 Q426.4 127.8 428.4 127.8 H435 Q437 127.8 437 125.8 V121.6" fill="none" stroke="#f9b233" stroke-width="1.6" /><path d="M430.2 124.4 L430.8 121.8 L436 116.6 L438 118.6 L432.8 123.8 Z" fill="#2e86de" /><circle cx="438.8" cy="115.2" r="1.5" fill="#f9a825"/><rect x="451.2" y="117.8" width="13.6" height="7.6" rx="1.4" fill="#2e86de" /><rect x="459.6" y="117.8" width="4" height="7.6" rx="0" fill="#7fb6ee" /><text x="452.6" y="124.2" font-family="Liberation Sans,sans-serif" font-size="6.6" fill="#fff" font-weight="bold">ab</text><path d="M460.2 115.3 H463.2 M461.7 115.3 V127.4 M460.2 127.4 H463.2" fill="none" stroke="#f7a13c" stroke-width="1.1" /><rect x="478.8" y="115.6" width="8.6" height="11.6" rx="0" fill="none" stroke="#f9b233" stroke-width="1.1" stroke-dasharray="1.3 1.3"/><rect x="480.6" y="117.2" width="5" height="2" rx="0" fill="#2e86de" /><rect x="480.6" y="120.4" width="5" height="2" rx="0" fill="#2e86de" /><rect x="480.6" y="123.6" width="5" height="2" rx="0" fill="#2e86de" /><circle cx="513.5" cy="117.4" r="2.9" fill="#f7941d"/><circle cx="503.2" cy="125.2" r="2.9" fill="#f7941d"/><path d="M500.4 117.4 L504 114.6 V116.4 H509 V118.4 H504 V120.2 Z" fill="#2e86de" /><path d="M516.6 125.2 L513 122.4 V124.2 H507.6 V126.2 H513 V128 Z" fill="#2e86de" /><rect x="527.2" y="115.2" width="11.9" height="12.3" rx="1.6" fill="#2e86de" /><line x1="531.2" y1="117.6" x2="531.2" y2="125.4" stroke="#fdd835" stroke-width="1.1" /><line x1="535.4" y1="117.6" x2="535.4" y2="125.4" stroke="#fdd835" stroke-width="1.1" /><rect x="552" y="115.6" width="5.6" height="5.4" rx="0" fill="#2e86de" /><rect x="559.2" y="115.6" width="5.6" height="5.4" rx="0" fill="#fbc02d" /><rect x="552" y="122.4" width="5.6" height="5.4" rx="0" fill="#2e86de" /><rect x="559.2" y="122.4" width="5.6" height="5.4" rx="0" fill="#2e86de" /><rect x="572.2" y="112" width="1" height="19.400000000000006" fill="#d3d8df"/><rect x="582" y="115.2" width="12.8" height="2.4" rx="0" fill="#5b9bd5" /><path d="M582 118 H594.8 L590 123.6 V128.8 L586.8 128 V123.6 Z" fill="#fdb813" /><rect x="605.8" y="115.2" width="6" height="6.2" rx="0" fill="#5b9bd5" /><rect x="611" y="117.2" width="9.8" height="11.6" rx="0.6" fill="#fff" stroke="#9a9a9a" stroke-width="0.9" /><rect x="613.2" y="116" width="5.2" height="2.2" rx="0.5" fill="#f0a030" /><circle cx="615.7" cy="123.4" r="2.8" fill="#e02323"/><path d="M614.4 123.4 L615.4 124.4 L617.2 122.4" fill="none" stroke="#fff" stroke-width="0.8" /><rect x="634.8" y="115.6" width="9.8" height="10.6" rx="0.8" fill="#2e86de" /><line x1="638" y1="116.4" x2="638" y2="125.6" stroke="#7fb6ee" stroke-width="0.8" /><line x1="641.2" y1="116.4" x2="641.2" y2="125.6" stroke="#7fb6ee" stroke-width="0.8" /><line x1="635.4" y1="118.6" x2="644" y2="118.6" stroke="#7fb6ee" stroke-width="0.8" /><line x1="635.4" y1="121" x2="644" y2="121" stroke="#7fb6ee" stroke-width="0.8" /><line x1="635.4" y1="123.4" x2="644" y2="123.4" stroke="#7fb6ee" stroke-width="0.8" /><path d="M633 118.6 L635 118.6 L635.4 123 L636.2 127.4 H631.8 L632.6 123 Z" fill="#f5b041" /><polygon points="652.3,121.4 656.9,121.4 654.5999999999999,124.30000000000001" fill="#111"/><rect x="664.3" y="115.3" width="4.8" height="3.5" rx="0.8" fill="none" stroke="#3a6fd8" stroke-width="1.2" /><rect x="664.3" y="119.6" width="4.8" height="3.5" rx="0.8" fill="none" stroke="#3a6fd8" stroke-width="1.2" /><rect x="664.3" y="123.9" width="4.8" height="3.5" rx="0.8" fill="none" stroke="#3a6fd8" stroke-width="1.2" /><text x="669.6" y="125.6" font-family="Liberation Sans,sans-serif" font-size="13.4" fill="#e53935" font-weight="bold" textLength="5.6" lengthAdjust="spacingAndGlyphs">}</text><rect x="687.2" y="115.6" width="5" height="12" rx="0" fill="#2e86de" /><path d="M692 121.6 H694.4 L698 117.8 M694.4 121.6 L698 125.4" fill="none" stroke="#fbc02d" stroke-width="1.3" /><circle cx="698.4" cy="117.6" r="1.3" fill="#fbc02d"/><circle cx="698.4" cy="125.6" r="1.3" fill="#fbc02d"/><rect x="710.7" y="119" width="6.8" height="5.6" rx="0" fill="#2e86de" /><path d="M717.5 121.8 H720.4 M718.8 121.8 L720.6 117 M718.8 121.8 L720.6 126.4" fill="none" stroke="#fbc02d" stroke-width="1.1" /><rect x="720.5" y="115.2" width="4.8" height="3.5" rx="0.4" fill="#2e86de" /><rect x="720.5" y="119.9" width="4.8" height="3.5" rx="0.4" fill="#2e86de" /><rect x="720.5" y="124.6" width="4.8" height="3.5" rx="0.4" fill="#2e86de" /><rect x="731.9" y="112" width="1" height="19.400000000000006" fill="#d3d8df"/><rect x="745.8" y="115.6" width="9.5" height="8.5" rx="0" fill="#6f9fd0" /><rect x="741.4" y="119" width="9" height="8.5" rx="0" fill="#a9cff2" /><rect x="746" y="119.4" width="4.2" height="4.6" rx="0" fill="#fdd835" /><polygon points="762.3,121.4 766.9,121.4 764.5999999999999,124.30000000000001" fill="#111"/><rect x="775.4" y="115.6" width="12" height="11.5" rx="0.8" fill="#2e86de" /><line x1="781.4" y1="115.6" x2="781.4" y2="127" stroke="#5fa5ea" stroke-width="1" /><path d="M777.4 124.2 H785.4 M781.4 119.6 V127.6" fill="none" stroke="#fbc02d" stroke-width="1.5" /><polygon points="795.9,121.4 800.5,121.4 798.1999999999999,124.30000000000001" fill="#111"/><rect x="808.6" y="115.6" width="11.4" height="11.2" rx="1" fill="#2e86de" /><path d="M810 118.2 L810.9 119.10000000000001 L812.4 117.4" fill="none" stroke="#fff" stroke-width="0.8" /><line x1="813.8" y1="118.2" x2="818" y2="118.2" stroke="#fff" stroke-width="0.9" /><path d="M810 121 L810.9 121.9 L812.4 120.2" fill="none" stroke="#fff" stroke-width="0.8" /><line x1="813.8" y1="121" x2="818" y2="121" stroke="#fff" stroke-width="0.9" /><path d="M810 123.8 L810.9 124.7 L812.4 123.0" fill="none" stroke="#fff" stroke-width="0.8" /><line x1="813.8" y1="123.8" x2="818" y2="123.8" stroke="#fff" stroke-width="0.9" /><circle cx="817.4" cy="124" r="2.5" fill="#fff" stroke="#f7a13c" stroke-width="1.1"/><line x1="819.2" y1="125.8" x2="821" y2="127.8" stroke="#f7a13c" stroke-width="1.3" /><polygon points="828.5,121.4 833.1,121.4 830.8,124.30000000000001" fill="#111"/><rect x="837.5" y="112" width="1" height="19.400000000000006" fill="#d3d8df"/><text x="846.8" y="126.4" font-family="Liberation Serif,serif" font-style="italic" font-weight="bold" font-size="17" fill="#f7941d">f</text><text x="852.6" y="127.2" font-family="Liberation Sans,sans-serif" font-style="italic" font-weight="bold" font-size="9" fill="#f7941d">x</text><polygon points="867.2,121.4 871.8000000000001,121.4 869.5,124.30000000000001" fill="#111"/><rect x="876.1" y="112" width="1" height="19.400000000000006" fill="#d3d8df"/><path d="M888.2 119.16 V126.63999999999999 A3.9 1.56 0 0 0 896.0 126.63999999999999 V119.16 Z" fill="#2e86de" /><ellipse cx="892.1" cy="119.16" rx="3.9" ry="1.56" fill="#6fb0ee"/><path d="M886.8 115.6 Q890.6 113.4 892.4 117.2" fill="none" stroke="#f7941d" stroke-width="1.3" /><path d="M890.8 117 L892.6 118.2 L893.6 116" fill="none" stroke="#f7941d" stroke-width="1" /><circle cx="895.6" cy="127" r="2" fill="#f7a13c" stroke="#fff" stroke-width="0.5"/><path d="M220.79999999999998 147.8 V156.0 M224.2 147.8 V156.0 M218.2 150.4 H226.79999999999998 M218.2 153.4 H226.79999999999998" fill="none" stroke="#f7941d" stroke-width="1.5" /><path d="M303.4 147.2 H310.4 L307.79999999999995 150.6 V154.39999999999998 L306.0 153.39999999999998 V150.6 Z" fill="#fff" stroke="#555" stroke-width="0.9" /><text x="314.9" y="154.9" font-family="Liberation Sans,sans-serif" font-weight="bold" font-size="8.8" fill="#f7941d" stroke="#f7941d" stroke-width=".45" textLength="11.8" lengthAdjust="spacingAndGlyphs">Ab</text><path d="M401.7 147.2 H408.7 L406.09999999999997 150.6 V154.39999999999998 L404.3 153.39999999999998 V150.6 Z" fill="#fff" stroke="#555" stroke-width="0.9" /><text x="413.2" y="154.9" font-family="Liberation Sans,sans-serif" font-weight="bold" font-size="8.8" fill="#f7941d" stroke="#f7941d" stroke-width=".45" textLength="11.8" lengthAdjust="spacingAndGlyphs">Ab</text><path d="M500.09999999999997 147.2 H507.09999999999997 L504.49999999999994 150.6 V154.39999999999998 L502.7 153.39999999999998 V150.6 Z" fill="#fff" stroke="#555" stroke-width="0.9" /><path d="M515.5 147.8 V156.0 M518.9 147.8 V156.0 M512.9 150.4 H521.5 M512.9 153.4 H521.5" fill="none" stroke="#f7941d" stroke-width="1.5" /><path d="M598.4 147.2 H605.4 L602.8 150.6 V154.39999999999998 L601.0 153.39999999999998 V150.6 Z" fill="#fff" stroke="#555" stroke-width="0.9" /><path d="M613.8000000000001 147.8 V156.0 M617.2 147.8 V156.0 M611.2 150.4 H619.8000000000001 M611.2 153.4 H619.8000000000001" fill="none" stroke="#f7941d" stroke-width="1.5" /><path d="M696.8 147.2 H703.8 L701.1999999999999 150.6 V154.39999999999998 L699.4 153.39999999999998 V150.6 Z" fill="#fff" stroke="#555" stroke-width="0.9" /><path d="M708.6 147.8 V156 M711.0 147.8 V156 M707.0 150.4 H712.6 M707.0 153.4 H712.6" fill="none" stroke="#f7941d" stroke-width="1.3" /><rect x="712.8" y="154.4" width="1.4" height="1.6" rx="0" fill="#f7941d" /><path d="M716.0 147.8 V156 M718.4 147.8 V156 M714.4 150.4 H720.0 M714.4 153.4 H720.0" fill="none" stroke="#f7941d" stroke-width="1.3" /><path d="M795.1 147.2 H802.1 L799.5 150.6 V154.39999999999998 L797.7 153.39999999999998 V150.6 Z" fill="#fff" stroke="#555" stroke-width="0.9" /><path d="M810.5000000000001 147.8 V156.0 M813.9000000000001 147.8 V156.0 M807.9000000000001 150.4 H816.5000000000001 M807.9000000000001 153.4 H816.5000000000001" fill="none" stroke="#f7941d" stroke-width="1.5" /><path d="M893 152.6 L896.2 149.4 L899.4 152.6" fill="none" stroke="#444" stroke-width="1.6" /><path d="M893 476 L896.2 479.4 L899.4 476" fill="none" stroke="#444" stroke-width="1.6" /><path d="M225.6 490.6 L222.6 493.7 L225.6 496.8" fill="none" stroke="#444" stroke-width="1.6" /><path d="M878.6 490.6 L881.8 493.7 L878.6 496.8" fill="none" stroke="#444" stroke-width="1.6" /><path d="M1264.4 152 L1267.4 148.8 L1270.4 152 Z" fill="#a0a0a0" /><circle cx="925.4" cy="123.1" r="6.7" fill="#3a8be0"/><path d="M920.4 119.6 Q923 117.4 925.4 119.4 Q927 121.4 925 123 Q922.6 124 921.6 126.4 Q919.4 123.6 920.4 119.6 Z" fill="#7fbdf3" /><path d="M927.6 117.6 Q930.6 119 931 122 Q929 121.6 927.6 117.6 Z" fill="#7fbdf3" /><circle cx="927.2" cy="125.4" r="2.5" fill="#cfe8f6" stroke="#f7a13c" stroke-width="1.2"/><line x1="929.2" y1="127.4" x2="931.6" y2="129.6" stroke="#555" stroke-width="1.4" /><rect x="944.9" y="117" width="12.2" height="12.8" rx="1.8" fill="#fff" stroke="#4a9be6" stroke-width="1.6" /><path d="M951.6 122 L954.2 119.4 M951.6 119.4 H954.2 V122 M950.2 124 L947.6 126.6 M947.6 124 V126.6 H950.2" fill="none" stroke="#f7a13c" stroke-width="1.2" /><path d="M970.27 121.52 A6.1 6.1 0 0 1 981.90 121.41" fill="none" stroke="#3fbf4c" stroke-width="1.8" /><path d="M981.93 125.08 A6.1 6.1 0 0 1 970.30 125.19" fill="none" stroke="#3fbf4c" stroke-width="1.8" /><path d="M979.30 121.70 H985.10 L982.20 125.50 Z" fill="#3fbf4c" /><path d="M967.10 124.90 H972.90 L970.00 121.10 Z" fill="#3fbf4c" /><rect x="990.1" y="113.6" width="1" height="19.0" fill="#d3d8df"/><rect x="993.4" y="111.4" width="24.4" height="24" rx="0" fill="#f3f7fb" stroke="#d3d8de" stroke-width="1" /><rect x="999.9" y="127.6" width="3.1" height="2.6" rx="0" fill="#2e86de" /><rect x="1004.6" y="126.6" width="3.3" height="3.6" rx="0" fill="#2e86de" /><rect x="1009.3" y="122" width="3.6" height="8.2" rx="0" fill="#2e86de" /><path d="M999 121.6 L1001 119.6 L1002.6 120.6 L1004.6 118.6 L1006.6 119.6 L1009 117.4 L1010.6 118 L1012.6 116.4" fill="none" stroke="#f7b733" stroke-width="1.1" /><path d="M1004.3 121 V125.6 M1007.6 120.6 V125" fill="none" stroke="#f7b733" stroke-width="1.5" /><rect x="1024.5" y="122" width="3.4" height="8.8" rx="0" fill="#f6a33b" /><rect x="1028.5" y="118.4" width="3.5" height="12.4" rx="0" fill="#b3e0e3" /><rect x="1032.5" y="121.4" width="3.4" height="9.4" rx="0" fill="#1fa8c9" /><rect x="1036" y="124" width="2.2" height="6.8" rx="0" fill="#8cc3a6" /><circle cx="1025.9" cy="119.9" r="1.25" fill="#f0533a"/><circle cx="1029.3" cy="116.4" r="1.25" fill="#f0533a"/><circle cx="1032.9" cy="119.5" r="1.25" fill="#f0533a"/><circle cx="1036.3" cy="121.7" r="1.25" fill="#f0533a"/></svg>
<div class="t" style="left:1120px;top:49px;color:#000;transform:scaleX(.94)">admin</div>
<div class="t" style="left:1173.5px;top:49px;color:#000;transform:scaleX(.87)">Server Connected</div>
<div class="t" style="left:279.5px;top:114.5px;color:#222;transform:scaleX(.86)">100%</div>
<svg class="a" style="left:0;top:0" width="1280" height="503" viewBox="0 0 1280 503" font-family="Liberation Sans,sans-serif"><text x="1091.5" y="166" text-anchor="middle" font-weight="bold" font-size="16" fill="#4a4f70" textLength="130" lengthAdjust="spacingAndGlyphs">Data Distribution</text><text x="943" y="339.9" text-anchor="end" font-size="10.6" fill="#6e7079">0</text><rect x="949.5" y="313.0" width="285" height="1" fill="#e0e6f1"/><text x="943" y="316.4" text-anchor="end" font-size="10.6" fill="#6e7079">1K</text><rect x="949.5" y="289.5" width="285" height="1" fill="#e0e6f1"/><text x="943" y="292.9" text-anchor="end" font-size="10.6" fill="#6e7079">2K</text><rect x="949.5" y="266.0" width="285" height="1" fill="#e0e6f1"/><text x="943" y="269.4" text-anchor="end" font-size="10.6" fill="#6e7079">3K</text><rect x="949.5" y="242.5" width="285" height="1" fill="#e0e6f1"/><text x="943" y="245.9" text-anchor="end" font-size="10.6" fill="#6e7079">4K</text><rect x="949.5" y="219.0" width="285" height="1" fill="#e0e6f1"/><text x="943" y="222.4" text-anchor="end" font-size="10.6" fill="#6e7079">5K</text><rect x="949.5" y="195.5" width="285" height="1" fill="#e0e6f1"/><text x="943" y="198.9" text-anchor="end" font-size="10.6" fill="#6e7079">6K</text><rect x="949" y="196" width="1" height="141.5" fill="#6e7079"/><rect x="949" y="337" width="286" height="1" fill="#6e7079"/><rect x="949.0" y="337" width="1" height="5" fill="#6e7079"/><rect x="1044.0" y="337" width="1" height="5" fill="#6e7079"/><rect x="1139.0" y="337" width="1" height="5" fill="#6e7079"/><rect x="1234.0" y="337" width="1" height="5" fill="#6e7079"/><rect x="975.8" y="219" width="41.6" height="118" fill="#3893d4"/><text x="996.5999999999999" y="352" text-anchor="middle" font-size="10.8" fill="#6e7079">France</text><rect x="1070.8" y="279" width="41.6" height="58" fill="#3893d4"/><text x="1091.6" y="352" text-anchor="middle" font-size="10.8" fill="#6e7079">Spain</text><rect x="1165.8" y="271.6" width="41.6" height="65.39999999999998" fill="#3893d4"/><text x="1186.6" y="352" text-anchor="middle" font-size="10.8" fill="#6e7079">Germany</text><text x="1091.5" y="367.4" text-anchor="middle" font-size="11" font-weight="bold" fill="#555" textLength="40" lengthAdjust="spacingAndGlyphs">country</text><rect x="952" y="375.4" width="284" height="17.6" fill="#e9effc"/><rect x="952" y="375.4" width="284" height="5.2" fill="#dde4f5"/><path d="M952 381.6 Q1040 383 1100 388.6 Q1170 392.4 1236 386.2 V393 H952 Z" fill="#dfe7f9"/><rect x="1089" y="377.6" width="5.4" height="1.4" fill="#fff"/><circle cx="952" cy="386.4" r="4.2" fill="#fff" stroke="#acb8d1" stroke-width="1"/><path d="M950.4 385.6 H953.6 M950.4 387.4 H953.6" stroke="#acb8d1" stroke-width=".8"/><circle cx="1236" cy="386.4" r="4.2" fill="#fff" stroke="#acb8d1" stroke-width="1"/><path d="M1234.4 385.6 H1237.6 M1234.4 387.4 H1237.6" stroke="#acb8d1" stroke-width=".8"/><text x="1091.5" y="424.4" text-anchor="middle" font-weight="bold" font-size="16" fill="#4a4f70" textLength="89" lengthAdjust="spacingAndGlyphs">Data Health</text><circle cx="1136" cy="467" r="34.4" fill="#91cc75"/><rect x="977.8" y="453.8" width="96.4" height="20.4" rx="8" fill="#fff" stroke="#bdbdbd" stroke-width="1.6"/><rect x="983" y="457.6" width="20" height="12.4" rx="2.4" fill="#91cc75"/><text x="1007.4" y="467.2" font-size="10.8" fill="#5a5a5a" textLength="62" lengthAdjust="spacingAndGlyphs">Healthy Data</text></svg>
</body></html>
